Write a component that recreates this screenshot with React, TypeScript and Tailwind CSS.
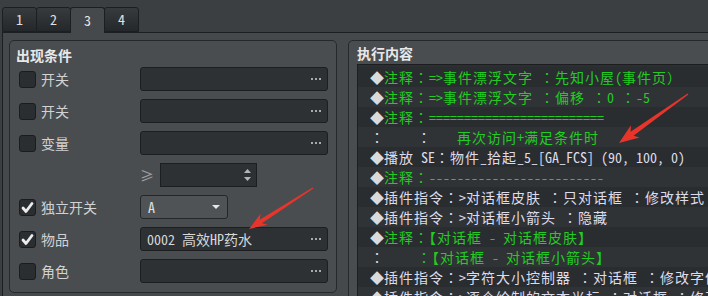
import React from "react";

const FONT = "font-['Noto_Sans_Mono_CJK_SC','Noto_Sans_CJK_SC',monospace]";
const TC = "font-['Noto_Sans_Mono_CJK_TC','Noto_Sans_CJK_TC',monospace]";

type Seg = { t: string; g?: boolean; cls?: string };
type Row = { diamond: boolean; segs: Seg[] };

const ROWS: Row[] = [
  { diamond: true, segs: [{ t: "注释：=>事件漂浮文字 ：先知小屋(事件页）", g: true }] },
  { diamond: true, segs: [{ t: "注释：=>事件漂浮文字 ：偏移 ：0 ：-5", g: true }] },
  { diamond: true, segs: [{ t: "注释：=========================", g: true }] },
  {
    diamond: false,
    segs: [
      { t: "：", cls: "inline-block w-[47px]" },
      { t: "：" },
      { t: "再次访问+满足条件时", g: true, cls: "ml-[25px]" },
    ],
  },
  { diamond: true, segs: [{ t: "播放 SE：物件_拾起_5_[GA_FCS] (90, 100, 0)" }] },
  { diamond: true, segs: [{ t: "注释：-------------------------", g: true }] },
  { diamond: true, segs: [{ t: "插件指令：>对话框皮肤 ：只对话框 ：修改样式" }] },
  { diamond: true, segs: [{ t: "插件指令：>对话框小箭头 ：隐藏" }] },
  { diamond: true, segs: [{ t: "注释：【对话框 - 对话框皮肤】", g: true }] },
  {
    diamond: false,
    segs: [
      { t: "：", cls: "inline-block w-[47px]" },
      { t: "：【对话框 - 对话框小箭头】", g: true },
    ],
  },
  { diamond: true, segs: [{ t: "插件指令：>字符大小控制器 ：对话框 ：修改字体" }] },
  { diamond: true, segs: [{ t: "插件指令：>逐个绘制的文本光标 ：对话框 ：修改" }] },
];

// the editor draws wide glyphs on a 15px cell and latin on 7px;
// full-width colons / close paren sit centred, so those come from the TC face
function cells(text: string) {
  return text.split(/([\u3000-\u30ff\u4e00-\u9fff\uff00-\uffef]+)/).map((part, k) => {
    if (!/[\u3000-\u30ff\u4e00-\u9fff\uff00-\uffef]/.test(part)) return <React.Fragment key={k}>{part}</React.Fragment>;
    return (
      <span key={k} className="tracking-[1px]">
        {part.split(/([：）])/).map((p, n) =>
          p === "：" || p === "）" ? (
            <span key={n} className={TC}>
              {p}
            </span>
          ) : (
            <React.Fragment key={n}>{p}</React.Fragment>
          )
        )}
      </span>
    );
  });
}

function Checkbox({ checked }: { checked?: boolean }) {
  return (
    <div className="w-[17px] h-[17px] shrink-0 rounded-[3px] bg-[#2b2e30] border border-[#1a1c1e] flex items-center justify-center">
      {checked && (
        <svg width="13" height="13" viewBox="0 0 13 13">
          <path d="M2 7 L5 10.5 L11 2.5" fill="none" stroke="#ececec" strokeWidth="2.8" strokeLinecap="round" strokeLinejoin="round" />
        </svg>
      )}
    </div>
  );
}

function Dots() {
  return (
    <div className="flex gap-[2px] items-center">
      <span className="w-[2px] h-[2px] bg-[#a8abae]" />
      <span className="w-[2px] h-[2px] bg-[#a8abae]" />
      <span className="w-[2px] h-[2px] bg-[#a8abae]" />
    </div>
  );
}

function PickField({ value }: { value?: string }) {
  return (
    <div className="w-[188px] h-6 rounded-[3px] bg-[#2e3134] border border-[#1c1e20] flex items-center justify-between pl-[6px] pr-[6px] text-[#d8d8d8]">
      <span>{value}</span>
      <Dots />
    </div>
  );
}

function CondRow({ label, checked, children }: { label?: string; checked?: boolean; children: React.ReactNode }) {
  return (
    <div className="h-8 flex items-center">
      <div className="w-[130px] pl-[9px] flex items-center gap-[5px] text-[#d2d2d2]">
        {label && <Checkbox checked={checked} />}
        {label && <span>{label}</span>}
      </div>
      {children}
    </div>
  );
}

function Arrow({ x1, y1, x2, y2, head = 18, hw = 14, sw = 5 }: { x1: number; y1: number; x2: number; y2: number; head?: number; hw?: number; sw?: number }) {
  const dx = x2 - x1;
  const dy = y2 - y1;
  const len = Math.hypot(dx, dy);
  const ux = dx / len;
  const uy = dy / len;
  const nx = -uy;
  const ny = ux;
  const bx = x2 - ux * head;
  const by = y2 - uy * head;
  const bx2 = x2 - ux * (head - 4);
  const by2 = y2 - uy * (head - 4);
  const p = [
    [x1 + nx * 0.6, y1 + ny * 0.6],
    [bx2 + (nx * sw) / 2, by2 + (ny * sw) / 2],
    [bx + (nx * hw) / 2, by + (ny * hw) / 2],
    [x2, y2],
    [bx - (nx * hw) / 2, by - (ny * hw) / 2],
    [bx2 - (nx * sw) / 2, by2 - (ny * sw) / 2],
    [x1 - nx * 0.6, y1 - ny * 0.6],
  ];
  return <polygon points={p.map((q) => q.join(",")).join(" ")} fill="#e8352c" />;
}

export default function App() {
  return (
    <div className={`relative w-[708px] h-[296px] overflow-hidden bg-[#3c3f42] text-[14px] ${FONT}`}>
      {/* tabs */}
      <div className="h-8 flex items-end pl-[2px]">
        {["1", "2", "3", "4"].map((t) => {
          const active = t === "3";
          return (
            <div
              key={t}
              className={
                active
                  ? "relative z-10 -ml-px -mb-px w-[35px] h-[26px] rounded-t-[3px] border border-b-0 border-[#1c1e20] bg-[#46494c] flex items-center justify-center pb-[1px] text-[#e6e6e6]"
                  : `${t === "1" ? "" : "-ml-px"} w-[35px] h-[25px] rounded-t-[3px] border border-[#1c1e20] bg-gradient-to-b from-[#383b3e] to-[#25282a] flex items-center justify-center text-[#e0e0e0]`
              }
            >
              {t}
            </div>
          );
        })}
      </div>

      {/* page */}
      <div className="ml-[2px] h-[264px] border-l border-t border-[#1c1e20] bg-[#46494c] flex gap-[11px] pl-[6px] pt-[7px]">
        {/* 出现条件 */}
        <div className="w-[328px] h-[253px] shrink-0 rounded-[5px] border border-[#26292b] bg-[#4a4d50]">
          <div className="h-[22px] pl-[6px] flex items-end leading-[16px] font-bold text-[#e8e8e8]">出现条件</div>
          <CondRow label="开关">
            <PickField />
          </CondRow>
          <CondRow label="开关">
            <PickField />
          </CondRow>
          <CondRow label="变量">
            <PickField />
          </CondRow>
          <CondRow>
            <span className="w-[20px] text-[#9ea2a6]">≥</span>
            <div className="w-[97px] h-6 border border-[#1c1e20] bg-[#2e3134] flex items-center justify-end pr-[4px]">
              <svg width="9" height="16" viewBox="0 0 9 16">
                <path d="M1 6 L4.5 2 L8 6 Z" fill="#b4b7ba" />
                <path d="M1 10 L4.5 14 L8 10 Z" fill="#b4b7ba" />
              </svg>
            </div>
          </CondRow>
          <CondRow label="独立开关" checked>
            <div className="w-[88px] h-6 rounded-[3px] border border-[#24272a] bg-[#505356] flex items-center justify-between pl-[7px] pr-[6px] text-[#e0e0e0]">
              <span>A</span>
              <svg width="10" height="6" viewBox="0 0 10 6">
                <path d="M1 1 L9 1 L5 5 Z" fill="#e6e6e6" />
              </svg>
            </div>
          </CondRow>
          <CondRow label="物品" checked>
            <PickField value="0002 高效HP药水" />
          </CondRow>
          <CondRow label="角色">
            <PickField />
          </CondRow>
        </div>

        {/* 执行内容 */}
        <div className="w-[380px] h-[280px] shrink-0 rounded-[5px] border border-[#26292b] bg-[#4a4d50] pl-[8px]">
          <div className="h-[23px] pt-[3px] leading-[18px] font-bold text-[#e8e8e8]">执行内容</div>
          <div className="border border-[#1c1e20] bg-[#2c2f32] pt-[2px] h-[260px]">
            {ROWS.map((r, i) => (
              <div
                key={i}
                className={`h-5 leading-[20px] whitespace-nowrap pl-[12px] ${i % 2 === 0 ? "bg-[#2a2d30]" : "bg-[#303336]"}`}
              >
                {r.diamond && <span className="text-[#dadada]">◆</span>}
                {r.segs.map((s, j) => (
                  <span key={j} className={`${s.g ? "text-[#22cc22]" : "text-[#dcdcec]"} ${s.cls ?? ""}`}>
                    {cells(s.t)}
                  </span>
                ))}
              </div>
            ))}
          </div>
        </div>
      </div>

      <svg className="absolute inset-0 pointer-events-none" width="708" height="296">
        <Arrow x1={688} y1={94} x2={619} y2={143} head={20} hw={15} sw={5} />
        <Arrow x1={313} y1={188} x2={249} y2={229} head={18} hw={13} sw={4} />
      </svg>
    </div>
  );
}
